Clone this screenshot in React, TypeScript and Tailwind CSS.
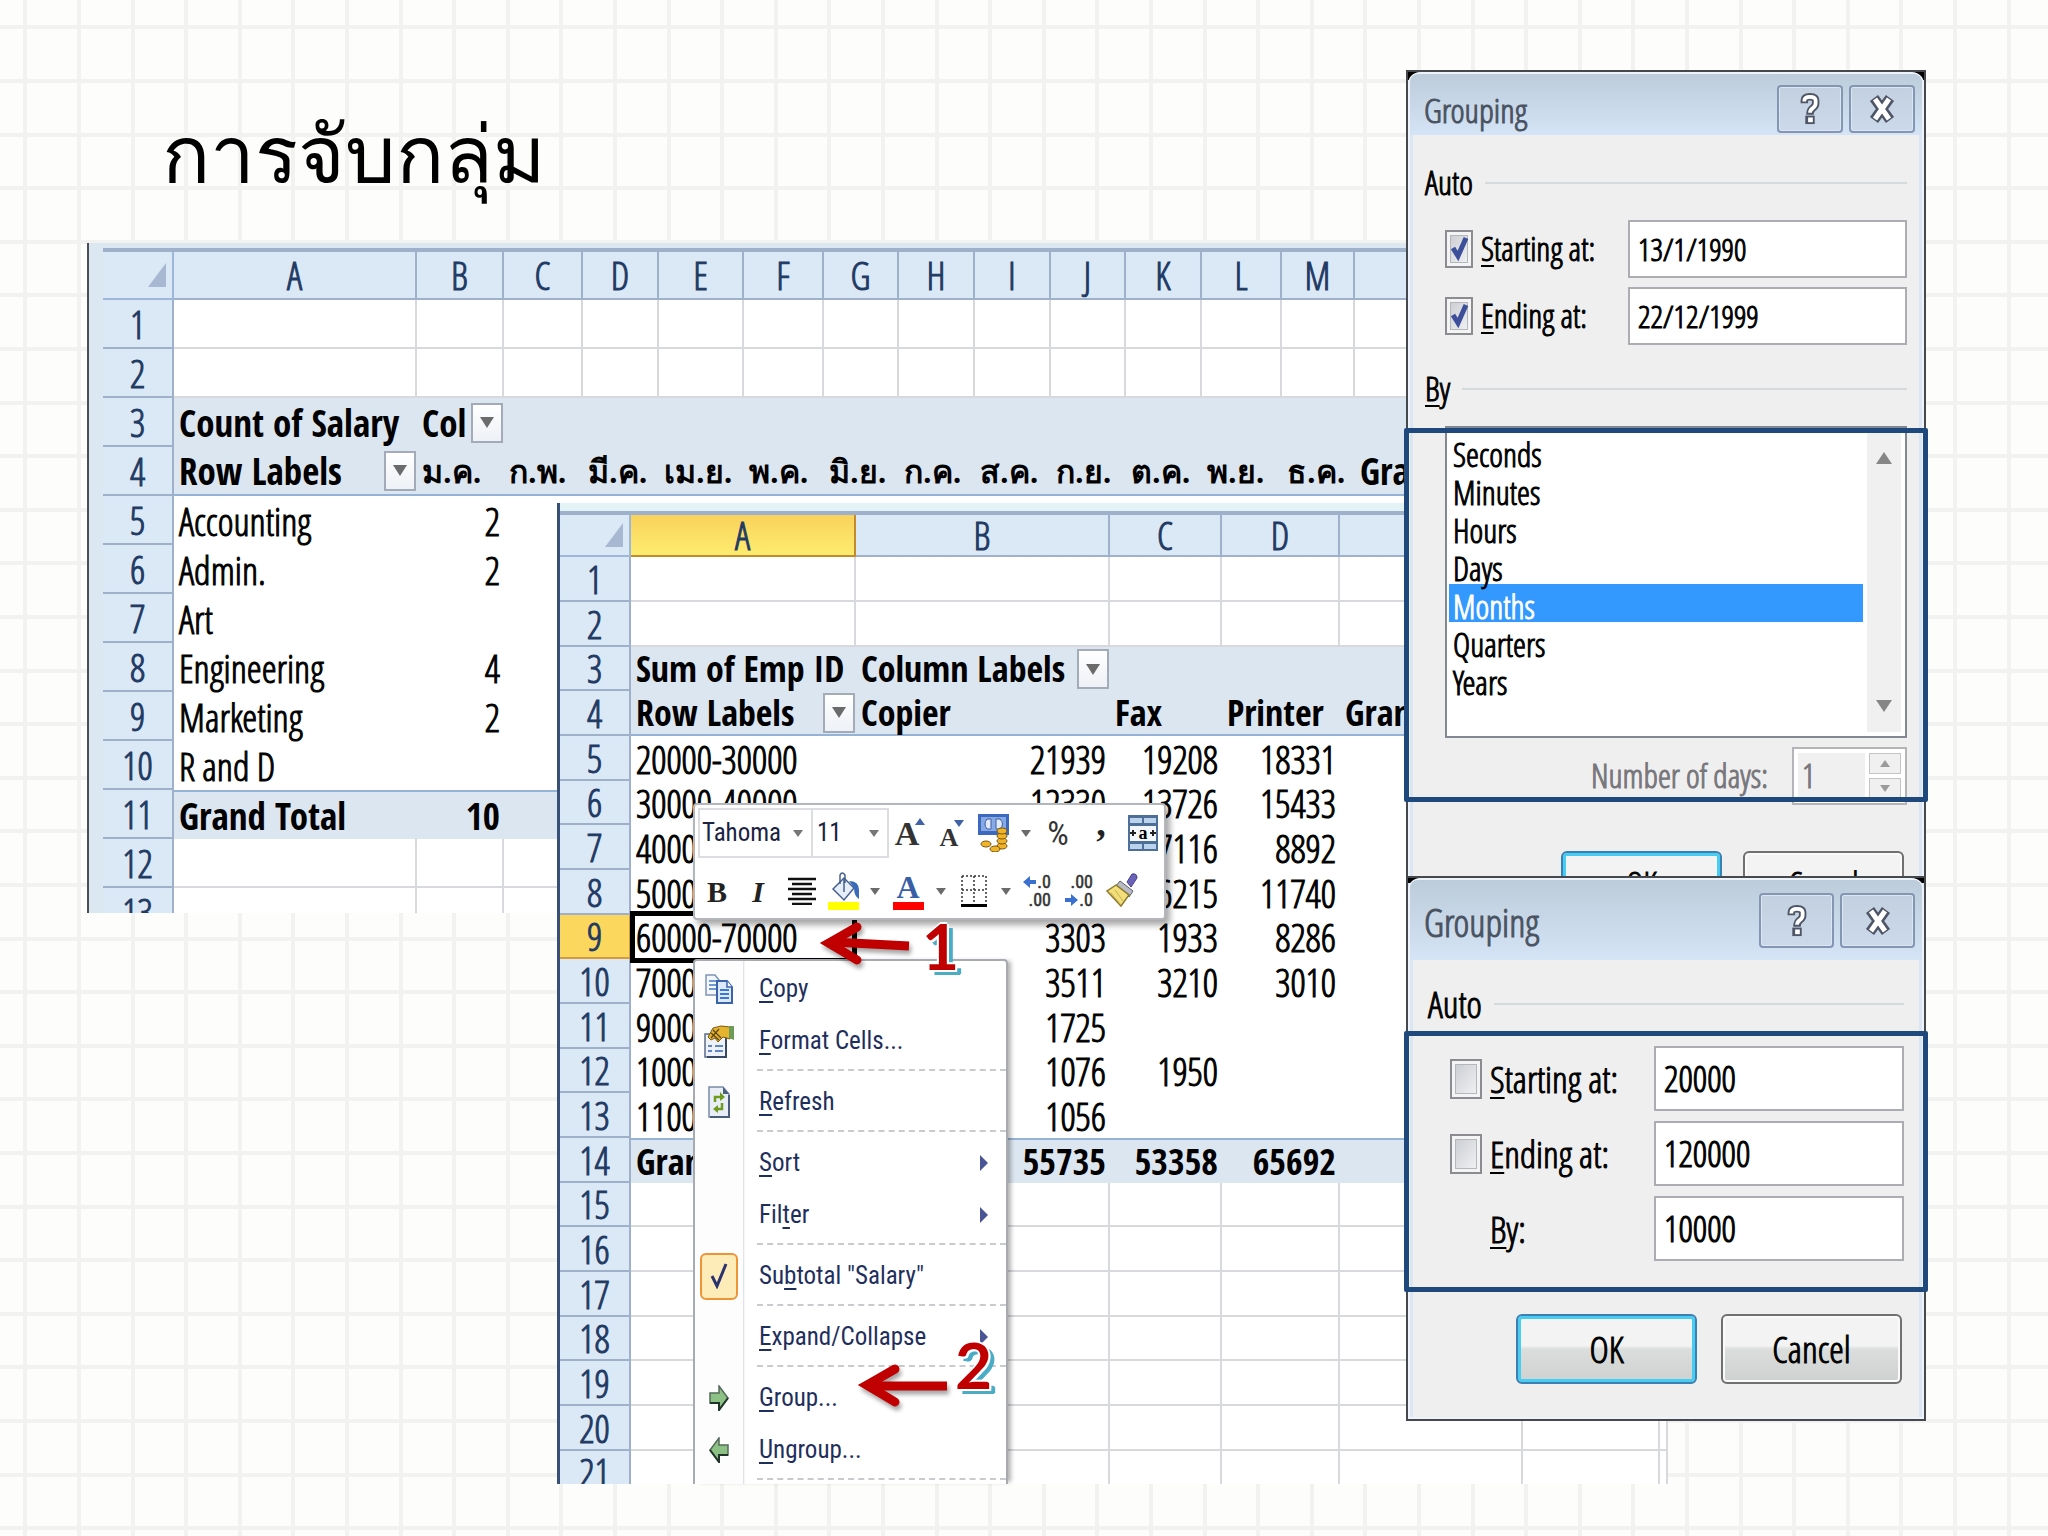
import React from 'react';
import clsx from 'clsx';

type Cell = string | number;
type RowKind = 'grid' | 'head' | 'headEnd' | 'data' | 'total';

interface SheetRow {
  kind: RowKind;
  cells?: Cell[];
  filters?: number[];
  active?: boolean;
}

interface SheetColumn {
  label: string;
  width: string;
  active?: boolean;
}

const staffColumns: SheetColumn[] = [
  { label: 'A', width: 'w-[243px]' },
  { label: 'B', width: 'w-[87px]' },
  { label: 'C', width: 'w-[79px]' },
  { label: 'D', width: 'w-[76px]' },
  { label: 'E', width: 'w-[85px]' },
  { label: 'F', width: 'w-[80px]' },
  { label: 'G', width: 'w-[75px]' },
  { label: 'H', width: 'w-[76px]' },
  { label: 'I', width: 'w-[76px]' },
  { label: 'J', width: 'w-[75px]' },
  { label: 'K', width: 'w-[76px]' },
  { label: 'L', width: 'w-[80px]' },
  { label: 'M', width: 'w-[73px]' },
  { label: '', width: 'w-[60px]' },
];

const staffRows: SheetRow[] = [
  { kind: 'grid' },
  { kind: 'grid' },
  { kind: 'head', cells: ['Count of Salary', 'Col'], filters: [1] },
  {
    kind: 'headEnd',
    cells: ['Row Labels', 'ม.ค.', 'ก.พ.', 'มี.ค.', 'เม.ย.', 'พ.ค.', 'มิ.ย.', 'ก.ค.', 'ส.ค.', 'ก.ย.', 'ต.ค.', 'พ.ย.', 'ธ.ค.', 'Gra'],
    filters: [0],
  },
  { kind: 'data', cells: ['Accounting', 2] },
  { kind: 'data', cells: ['Admin.', 2] },
  { kind: 'data', cells: ['Art'] },
  { kind: 'data', cells: ['Engineering', 4] },
  { kind: 'data', cells: ['Marketing', 2] },
  { kind: 'data', cells: ['R and D'] },
  { kind: 'total', cells: ['Grand Total', 10] },
  { kind: 'grid' },
  { kind: 'grid' },
];

const deviceColumns: SheetColumn[] = [
  { label: 'A', width: 'w-[225px]', active: true },
  { label: 'B', width: 'w-[254px]' },
  { label: 'C', width: 'w-[112px]' },
  { label: 'D', width: 'w-[118px]' },
  { label: '', width: 'w-[183px]' },
  { label: '', width: 'w-[137px]' },
  { label: '', width: 'w-[8px]' },
];

const deviceRows: SheetRow[] = [
  { kind: 'grid' },
  { kind: 'grid' },
  { kind: 'head', cells: ['Sum of Emp ID', 'Column Labels'], filters: [1] },
  { kind: 'headEnd', cells: ['Row Labels', 'Copier', 'Fax', 'Printer', 'Gran'], filters: [0] },
  { kind: 'data', cells: ['20000-30000', 21939, 19208, 18331] },
  { kind: 'data', cells: ['30000-40000', 12330, 13726, 15433] },
  { kind: 'data', cells: ['4000', '', 7116, 8892] },
  { kind: 'data', cells: ['5000', '', 6215, 11740] },
  { kind: 'data', cells: ['60000-70000', 3303, 1933, 8286], active: true },
  { kind: 'data', cells: ['7000', 3511, 3210, 3010] },
  { kind: 'data', cells: ['9000', 1725] },
  { kind: 'data', cells: ['1000', 1076, 1950] },
  { kind: 'data', cells: ['1100', 1056] },
  { kind: 'total', cells: ['Gran', 55735, 53358, 65692] },
  { kind: 'grid' },
  { kind: 'grid' },
  { kind: 'grid' },
  { kind: 'grid' },
  { kind: 'grid' },
  { kind: 'grid' },
  { kind: 'grid' },
];

const cellStyles: Record<RowKind, string> = {
  grid: 'border-r-2 border-b-2 border-[#d8d9dc] bg-white',
  head: 'bg-[#dce6f1]',
  headEnd: 'border-b-2 border-[#95b3d7] bg-[#dce6f1]',
  data: 'bg-white',
  total: 'border-t-2 border-[#95b3d7] bg-[#dce6f1]',
};

const isThai = (value: Cell) => /[\u0e00-\u0e7f]/.test(String(value));

const Caret = ({ className = 'fill-[#6b6b6b]' }: { className?: string }) => (
  <svg viewBox="0 0 10 7" className={clsx('h-[7px] w-[10px]', className)} aria-hidden="true">
    <path d="M0 0h10L5 7z" />
  </svg>
);

const FilterButton = ({ label }: { label: string }) => (
  <button
    type="button"
    aria-label={label}
    className="flex h-10 w-8 shrink-0 items-center justify-center border-2 border-[#a3abb8] bg-linear-to-b from-white to-[#eef1f6]"
  >
    <svg viewBox="0 0 14 11" className="h-[11px] w-[14px] fill-[#6b6b6b]" aria-hidden="true">
      <path d="M0 0h14L7 11z" />
    </svg>
  </button>
);

interface SheetProps {
  name: string;
  columns: SheetColumn[];
  rows: SheetRow[];
  headHeight: string;
  rowHeight: string;
  boldSize: string;
  className: string;
}

const Sheet = ({ name, columns, rows, headHeight, rowHeight, boldSize, className }: SheetProps) => (
  <section className={clsx('absolute isolate overflow-hidden', className)}>
    <table
      aria-label={name}
      className="w-full table-fixed border-separate border-spacing-0 border-t-4 border-[#9eb0ca] text-[38px] leading-10 whitespace-nowrap"
    >
      <colgroup>
        <col className="w-[71px]" />
        {columns.map((col, i) => (
          <col key={i} className={col.width} />
        ))}
      </colgroup>
      <thead>
        <tr className={headHeight}>
          <th aria-label="Select all" className="border-r-2 border-b-2 border-[#9eb6d8] bg-[#dbe8f6] p-0">
            <svg viewBox="0 0 18 24" className="mr-1.5 ml-auto h-6 w-[18px] fill-[#a9b8d2]" aria-hidden="true">
              <path d="M18 0v24H0z" />
            </svg>
          </th>
          {columns.map((col, i) => (
            <th
              key={i}
              className={clsx(
                'border-r-2 border-b-2 p-0 text-center font-normal text-[#1f3a63] [-webkit-text-stroke:1px]',
                col.active ? 'border-[#c58a2a] bg-linear-to-b from-[#f9d25c] to-[#fdec6f]' : 'border-[#9eb0ca] bg-[#dbe8f6]',
              )}
            >
              {col.label}
            </th>
          ))}
        </tr>
      </thead>
      <tbody>
        {rows.map((row, r) => (
          <tr key={r} className={rowHeight}>
            <th
              className={clsx(
                'border-r-2 border-b-2 p-0 text-center font-normal text-[#1f3a63] [-webkit-text-stroke:1px]',
                row.active ? 'border-[#d59a3a] bg-[#fbd75e]' : 'border-[#9eb0ca] bg-[#dbe8f6]',
              )}
            >
              {r + 1}
            </th>
            {columns.map((_, c) => {
              const value = row.cells?.[c] ?? '';
              const bold = row.kind !== 'data' && row.kind !== 'grid';
              return (
                <td
                  key={c}
                  className={clsx(
                    'py-0 pr-1 pl-[5px] text-black',
                    cellStyles[row.kind],
                    typeof value === 'number' && 'text-right',
                    bold
                      ? 'font-["Open_Sans_Condensed","Roboto_Condensed",sans-serif] font-bold'
                      : '[-webkit-text-stroke:1px]',
                    bold && (isThai(value) ? 'text-[32px]' : boldSize),
                    row.active && c === 0 && 'relative z-10',
                  )}
                >
                  {row.filters?.includes(c) ? (
                    <span className="-mr-[3px] flex items-center justify-between">
                      <span>{value}</span>
                      <FilterButton label={`Filter ${value}`} />
                    </span>
                  ) : (
                    value
                  )}
                  {row.active && c === 0 && <span className="absolute -inset-x-px -inset-y-1 border-[5px] border-black" />}
                </td>
              );
            })}
          </tr>
        ))}
      </tbody>
    </table>
  </section>
);

const TitleBar = ({ large }: { large?: boolean }) => (
  <header
    className={clsx(
      'flex justify-between rounded-t-lg bg-linear-to-b from-[#bdccda] to-[#d5e4f6] pr-[7px] pl-3.5 text-[#4a5361]',
      large ? 'h-20 pt-[13px] text-[38px]' : 'h-[68px] pt-[11px] text-[34px]',
    )}
  >
    <h2 className={large ? 'leading-[58px]' : 'leading-[50px]'}>Grouping</h2>
    <div className="flex gap-1.5">
      {['Help', 'Close'].map((name) => (
        <button
          key={name}
          type="button"
          aria-label={name}
          className={clsx(
            'flex items-center justify-center rounded-sm border-2 border-[#8496b4] bg-linear-to-b from-[#c3d0e0] to-[#cbd9ea] shadow-[inset_0_0_0_1px_#dce6f1]',
            large ? 'h-[55px] w-[75px]' : 'h-12 w-[66px]',
          )}
        >
          {name === 'Help' ? (
            <svg viewBox="0 0 20 34" className="h-8 w-5" fill="none" aria-hidden="true">
              <path d="M4 11V8q0-4 6-4t6 4v3q0 3-3 5t-3 7" stroke="#4d5566" strokeWidth="8" />
              <path d="M5 24h10v9H5z" fill="#4d5566" />
              <path d="M4 9V8q0-4 6-4t6 4v3q0 3-3 5t-3 5" stroke="#fff" strokeWidth="4" />
              <path d="M8 26h5v5H8z" fill="#fff" />
            </svg>
          ) : (
            <svg viewBox="0 0 26 28" className="h-7 w-[26px]" fill="none" aria-hidden="true">
              <path d="m5 3 16 22M21 3 5 25" stroke="#4d5566" strokeWidth="10" />
              <path d="m6 4 14 20M20 4 6 24" stroke="#fff" strokeWidth="5" />
            </svg>
          )}
        </button>
      ))}
    </div>
  </header>
);

interface DialogProps {
  className: string;
  large?: boolean;
  children: React.ReactNode;
}

const Dialog = ({ className, large, children }: DialogProps) => (
  <section
    role="dialog"
    aria-label="Grouping"
    className={clsx(
      'absolute left-[1406px] w-[520px] overflow-hidden border-2 border-[#45484c] bg-linear-to-b from-black from-1% to-[#dbe5f3] to-1% [-webkit-text-stroke:1px]',
      className,
    )}
  >
    <div className="flex h-full flex-col rounded-t-xl border-2 border-[#eef3fa] bg-[#dbe5f3]">
      <TitleBar large={large} />
      <div className="mx-[3px] flex-1 bg-[#f0eff0]">{children}</div>
    </div>
  </section>
);

const GroupLabel = ({ children }: { children: React.ReactNode }) => (
  <div className="flex h-10 items-center gap-3">
    <span>{children}</span>
    <span className="h-0.5 flex-1 bg-[#d5dadd]" />
  </div>
);

const Key = ({ children }: { children: React.ReactNode }) => (
  <u className="decoration-2 underline-offset-4">{children}</u>
);

interface RangeFieldProps {
  id: string;
  hotkey: string;
  label: string;
  value: string;
  checked?: boolean;
  large?: boolean;
  noCheck?: boolean;
}

const RangeField = ({ id, hotkey, label, value, checked, large, noCheck }: RangeFieldProps) => (
  <div className={clsx('flex items-center', large ? 'h-[65px]' : 'h-[58px]')}>
    {noCheck ? (
      <span className="w-8" />
    ) : (
      <span className="relative flex">
        <input
          id={`${id}-on`}
          type="checkbox"
          defaultChecked={checked}
          aria-label={`${hotkey}${label}`}
          className={clsx(
            'appearance-none border-2 border-[#8a8c90] bg-linear-to-br from-[#c6c9cf] to-[#f6f6f7] shadow-[inset_0_0_0_3px_#f4f4f4,inset_0_0_0_4px_#b4b7bc]',
            large ? 'h-10 w-8' : 'h-[38px] w-7',
          )}
        />
        {checked && (
          <svg viewBox="0 0 20 26" className="pointer-events-none absolute top-1.5 left-1 h-[26px] w-5" fill="none" aria-hidden="true">
            <path d="m4 12 5 8 8-18" stroke="#3d4f9b" strokeWidth="5" />
          </svg>
        )}
      </span>
    )}
    <label htmlFor={id} className="ml-2 flex-1 whitespace-nowrap">
      <Key>{hotkey}</Key>
      {label}
    </label>
    <input
      id={id}
      defaultValue={value}
      className={clsx(
        'h-full border-2 border-[#abadb3] bg-white px-2 outline-none [-webkit-text-stroke:1px]',
        large ? 'w-[250px] text-[36px]' : 'w-[279px] text-[31px]',
      )}
    />
  </div>
);

const DialogButton = ({ primary, large, children }: { primary?: boolean; large?: boolean; children: React.ReactNode }) => (
  <button
    type="button"
    className={clsx(
      'rounded-md border-2 bg-linear-to-b from-[#f2f3f2] from-45% via-[#dcdedd] via-50% to-[#cfd1d0] [-webkit-text-stroke:1px]',
      primary ? 'border-[#3c7fb1] shadow-[inset_0_0_0_3px_#48cdf2]' : 'border-[#707070] shadow-[inset_0_0_0_2px_#fafafa]',
      large ? 'h-[70px] w-[181px]' : 'h-[66px] w-[161px]',
    )}
  >
    {children}
  </button>
);

const units = ['Seconds', 'Minutes', 'Hours', 'Days', 'Months', 'Quarters', 'Years'];

const DateGrouping = () => (
  <Dialog className="top-[70px] h-[810px] text-[33px]">
    <div className="flex flex-col pt-7 pr-3 pl-3 leading-[38px]">
      <GroupLabel>Auto</GroupLabel>
      <div className="mt-[17px] flex flex-col gap-[9px] pl-5">
        <RangeField id="date-start" hotkey="S" label="tarting at:" value="13/1/1990" checked />
        <RangeField id="date-end" hotkey="E" label="nding at:" value="22/12/1999" checked />
      </div>
      <div className="mt-6">
        <GroupLabel>
          <Key>B</Key>y
        </GroupLabel>
      </div>
      <div className="mt-[17px] ml-5 flex h-[312px] border-2 border-[#828790] bg-white">
        <select
          size={7}
          defaultValue="Months"
          aria-label="By"
          className="flex-1 appearance-none overflow-hidden bg-white pt-1 pl-0.5 text-black outline-none"
        >
          {units.map((unit) => (
            <option
              key={unit}
              className="h-[38px] min-h-0 p-0 pl-1 leading-[38px] [-webkit-text-stroke:1px] checked:bg-[linear-gradient(#3399ff,#3399ff)] checked:text-white"
            >
              {unit}
            </option>
          ))}
        </select>
        <div className="my-1 mr-1 ml-1 flex w-[34px] flex-col items-center justify-between bg-[#f0f0f1] py-5" aria-hidden="true">
          <svg viewBox="0 0 16 12" className="h-3 w-4 fill-[#868686]">
            <path d="m8 0 8 12H0z" />
          </svg>
          <svg viewBox="0 0 16 12" className="h-3 w-4 fill-[#868686]">
            <path d="M0 0h16L8 12z" />
          </svg>
        </div>
      </div>
      <div className="mt-[9px] flex h-[58px] items-center justify-end gap-6 text-[#77777b]">
        <label htmlFor="days">Number of days:</label>
        <div className="flex h-full w-[115px] border-2 border-[#b4b5b8] bg-white p-1">
          <input id="days" defaultValue="1" disabled className="min-w-0 flex-1 bg-[#f0f0f0] pl-1 [-webkit-text-stroke:1px]" />
          <div className="ml-1 flex w-[32px] flex-col gap-1">
            <button type="button" aria-label="More days" className="flex flex-1 items-center justify-center border border-[#c4c4c6] bg-[#f0f0f0]">
              <Caret className="rotate-180 fill-[#9a9a9a]" />
            </button>
            <button type="button" aria-label="Fewer days" className="flex flex-1 items-center justify-center border border-[#c4c4c6] bg-[#f0f0f0]">
              <Caret className="fill-[#9a9a9a]" />
            </button>
          </div>
        </div>
      </div>
      <div className="mt-[46px] flex justify-end gap-[21px] pr-[3px]">
        <DialogButton primary>OK</DialogButton>
        <DialogButton>Cancel</DialogButton>
      </div>
    </div>
  </Dialog>
);

const NumberGrouping = () => (
  <Dialog large className="top-[876px] h-[545px] text-[37px]">
    <div className="flex flex-col pt-6 pr-[15px] pl-[15px] leading-10">
      <GroupLabel>Auto</GroupLabel>
      <div className="mt-[22px] flex flex-col gap-[10px] pl-[22px]">
        <RangeField large id="num-start" hotkey="S" label="tarting at:" value="20000" />
        <RangeField large id="num-end" hotkey="E" label="nding at:" value="120000" />
        <RangeField large noCheck id="num-by" hotkey="B" label="y:" value="10000" />
      </div>
      <div className="mt-[53px] flex justify-end gap-6 pr-0.5">
        <DialogButton primary large>
          OK
        </DialogButton>
        <DialogButton large>Cancel</DialogButton>
      </div>
    </div>
  </Dialog>
);

const CopyIcon = () => (
  <svg viewBox="0 0 28 30" className="h-[30px] w-7" aria-hidden="true">
    <path d="M1 1h9l4 5v15H1z" fill="#f4f8fd" stroke="#7d93b8" strokeWidth="1.5" />
    <path d="M4 7h7M4 11h7M4 15h7" stroke="#6f97d4" strokeWidth="2" />
    <path d="M12 7h10l5 6v16H12z" fill="#dbe9fb" stroke="#3a62ad" strokeWidth="2" />
    <path d="M22 7v6h5" fill="#fff" stroke="#3a62ad" strokeWidth="1.5" />
    <path d="M15 16h9M15 20h9M15 24h9" stroke="#3d78cf" strokeWidth="2" />
  </svg>
);

const FormatIcon = () => (
  <svg viewBox="0 0 30 33" className="h-[33px] w-[30px]" aria-hidden="true">
    <path d="M1 9h21v23H1z" fill="#eef2f8" stroke="#5a6c88" strokeWidth="1.5" />
    <path d="M22 12v20H3" fill="none" stroke="#394a66" strokeWidth="2" />
    <path d="M4 21h4M11 21h8M4 26h4M11 26h8" stroke="#5e86c4" strokeWidth="2" />
    <path d="M4 12 9 3l8-2 9 1v12l-7-2-5 5-3-4-4 2z" fill="#e5b32e" stroke="#7c5a13" />
    <path d="m7 8 8 7M9 5l8 8M7 13l8-9" stroke="#5d450f" strokeWidth="1.2" />
    <path d="M25 1h5v14l-5-2z" fill="#6c9b57" />
  </svg>
);

const RefreshIcon = () => (
  <svg viewBox="0 0 22 32" className="h-8 w-[22px]" aria-hidden="true">
    <path d="M1 1h14l6 7v23H1z" fill="#e9eef6" stroke="#7a8ba6" strokeWidth="1.5" />
    <path d="M15 1v7h6" fill="#4b5d7b" />
    <path d="M21 9v22H2" fill="none" stroke="#4b5d7b" strokeWidth="2" />
    <path d="M7 16v-5h7M14 17v6H7" fill="none" stroke="#6e9a1e" strokeWidth="2.5" />
    <path d="m12 6 5 5-5 4zM10 19l-5 4 5 4z" fill="#6e9a1e" />
  </svg>
);

const GroupArrow = ({ flip }: { flip?: boolean }) => (
  <svg viewBox="0 0 20 26" className={clsx('h-[26px] w-5', flip && '-scale-x-100')} aria-hidden="true">
    <path d="M1 8h9V1l9 12-9 12v-7H1z" fill="#8cc084" stroke="#55695a" strokeWidth="1.5" />
    <path d="M1 18h9v7l9-12" fill="none" stroke="#20352a" strokeWidth="2" />
  </svg>
);

const CheckedIcon = () => (
  <span className="flex h-[47px] w-[38px] items-center justify-center rounded-md border-2 border-[#ee9438] bg-[#fdecb8]">
    <svg viewBox="0 0 18 26" className="h-[26px] w-[18px]" fill="none" aria-hidden="true">
      <path d="m2 13 5 10L16 1" stroke="#2b3270" strokeWidth="3" />
    </svg>
  </span>
);

interface MenuEntry {
  before: string;
  hotkey: string;
  after: string;
  icon?: React.ReactNode;
  submenu?: boolean;
}

const menuGroups: MenuEntry[][] = [
  [
    { before: '', hotkey: 'C', after: 'opy', icon: <CopyIcon /> },
    { before: '', hotkey: 'F', after: 'ormat Cells...', icon: <FormatIcon /> },
  ],
  [{ before: '', hotkey: 'R', after: 'efresh', icon: <RefreshIcon /> }],
  [
    { before: '', hotkey: 'S', after: 'ort', submenu: true },
    { before: 'Fil', hotkey: 't', after: 'er', submenu: true },
  ],
  [{ before: 'Su', hotkey: 'b', after: 'total "Salary"', icon: <CheckedIcon /> }],
  [{ before: '', hotkey: 'E', after: 'xpand/Collapse', submenu: true }],
  [
    { before: '', hotkey: 'G', after: 'roup...', icon: <GroupArrow /> },
    { before: '', hotkey: 'U', after: 'ngroup...', icon: <GroupArrow flip /> },
  ],
];

const ContextMenu = () => (
  <div
    role="menu"
    className="absolute top-[959px] left-[693px] h-[525px] w-[315px] rounded-t border-2 border-b-0 border-[#a7abb0] bg-linear-to-r from-[#fdfdfd] from-[48px] via-[#d9dadc] via-[48px] to-white to-[50px] pt-0.5 font-['Roboto_Condensed',sans-serif] text-[25px] text-[#1f2f5c] shadow-[5px_0_4px_-2px_rgba(0,0,0,0.3)]"
  >
    {menuGroups.map((group, g) => (
      <React.Fragment key={g}>
        {group.map((entry) => (
          <button key={entry.hotkey} type="button" role="menuitem" className="flex h-[52px] w-full items-center text-left">
            <span className="flex w-[48px] justify-center">{entry.icon}</span>
            <span className="ml-4 flex-1">
              {entry.before}
              <Key>{entry.hotkey}</Key>
              {entry.after}
            </span>
            {entry.submenu && (
              <svg viewBox="0 0 8 16" className="mr-[18px] h-4 w-2 fill-[#4a5596]" aria-hidden="true">
                <path d="m0 0 8 8-8 8z" />
              </svg>
            )}
          </button>
        ))}
        <div role="separator" className="mt-[2px] mb-[5px] ml-[62px] border-t-2 border-dashed border-[#c9cacd]" />
      </React.Fragment>
    ))}
  </div>
);

const CurrencyIcon = () => (
  <svg viewBox="0 0 32 38" className="h-[38px] w-8" aria-hidden="true">
    <path d="M0 0h31v21H0z" fill="#3c68bd" />
    <path d="M3 3h25v14H3z" fill="#87a9e4" />
    <path d="M9 5q-4 5 0 10h4V5zM18 5v10h4q5-5 0-10z" fill="#dfe9fa" stroke="#3c5ca4" />
    <g fill="#f0b429" stroke="#7d5610">
      <ellipse cx="24" cy="32" rx="5" ry="3" />
      <ellipse cx="24" cy="27" rx="5" ry="3" />
      <ellipse cx="24" cy="22" rx="5" ry="3" />
      <ellipse cx="24" cy="17" rx="5" ry="3" />
      <ellipse cx="8" cy="30" rx="5" ry="3" />
      <ellipse cx="17" cy="35" rx="5" ry="3" />
    </g>
  </svg>
);

const MergeIcon = () => (
  <svg viewBox="0 0 30 36" className="h-9 w-[30px]" aria-hidden="true">
    <path d="M0 0h30v36H0z" fill="#4e6f98" />
    <path d="M2 3h12v5H2zM16 3h12v5H16zM2 29h12v5H2zM16 29h12v5H16z" fill="#bcd3ee" />
    <path d="M2 11h26v15H2z" fill="#f3f7fc" />
    <path d="M2 18h6M5 15v6M28 18h-6M25 15v6" stroke="#222" strokeWidth="2" />
    <text x="15" y="24" textAnchor="middle" fontSize="18" fontWeight="700" fontFamily="Liberation Serif, serif">
      a
    </text>
  </svg>
);

const BucketIcon = () => (
  <svg viewBox="0 0 32 38" className="h-[38px] w-8" aria-hidden="true">
    <path d="M0 30h31v8H0z" fill="#ffff00" />
    <path d="m5 17 11-11 10 10-10 12z" fill="#e6eefa" stroke="#47618f" strokeWidth="1.5" />
    <path d="M16 6v14M12 12V3q2-4 5 0v8" fill="none" stroke="#47618f" strokeWidth="1.5" />
    <path d="M21 9q10 0 10 9v9q-5-3-5-11z" fill="#3a6bb8" />
  </svg>
);

const BordersIcon = () => (
  <svg viewBox="0 0 26 32" className="h-8 w-[26px]" fill="none" stroke="#333" aria-hidden="true">
    <path d="M1 1h24v26M1 1v26M13 1v26M1 15h24" strokeWidth="1.5" strokeDasharray="2 2" />
    <path d="M0 30.5h26" stroke="#000" strokeWidth="3" />
  </svg>
);

const DecimalIcon = ({ decrease }: { decrease?: boolean }) => (
  <svg viewBox="0 0 32 34" className="h-[34px] w-8" aria-hidden="true">
    <g fontSize="18" fontFamily="Roboto Condensed, sans-serif" fill="#333" stroke="#333" strokeWidth=".5" textAnchor="end">
      <text x="30" y="14">{decrease ? '.00' : '.0'}</text>
      <text x="30" y="32">{decrease ? '.0' : '.00'}</text>
    </g>
    <path d={decrease ? 'M2 24h6v-4l7 6-7 6v-4H2z' : 'M15 6H9V2L2 8l7 6v-4h6z'} fill="#3b6fd0" />
  </svg>
);

const BrushIcon = () => (
  <svg viewBox="0 0 32 36" className="h-9 w-8" aria-hidden="true">
    <path d="m21 9 5-8q5-1 5 4l-6 9z" fill="#6a63b8" stroke="#453f86" />
    <path d="m14 8 13 10-4 6L10 13z" fill="#b9bcc6" stroke="#5b5e68" />
    <path d="M10 12 1 18l14 15 8-11z" fill="#f2df7c" stroke="#8d7a2c" strokeWidth="1.5" />
    <path d="m5 20 10 12M9 17l8 11" stroke="#c9b14c" />
  </svg>
);

const ToolButton = ({ label, className, children }: { label: string; className: string; children: React.ReactNode }) => (
  <button type="button" aria-label={label} className={clsx('flex h-full shrink-0 items-center justify-center', className)}>
    {children}
  </button>
);

const MiniToolbar = () => (
  <div
    role="toolbar"
    aria-label="Formatting"
    className="absolute top-[803px] left-[693px] w-[473px] rounded border-2 border-[#b3b6ba] bg-white pt-[3px] pb-[2px] pl-[3px] font-['Roboto_Condensed',sans-serif] shadow-[4px_5px_6px_rgba(0,0,0,0.35)]"
  >
    <div className="flex h-[50px]">
      <div className="flex w-[115px] items-center border-2 border-[#dcdde0] text-[25px]">
        <select aria-label="Font" className="min-w-0 flex-1 appearance-none pl-0.5 text-[#1c2340] outline-none">
          <option>Tahoma</option>
        </select>
        <Caret className="mr-2 fill-[#777]" />
      </div>
      <div className="flex w-[76px] items-center border-2 border-l-0 border-[#dcdde0] text-[25px]">
        <select aria-label="Font size" className="min-w-0 flex-1 appearance-none pl-1 text-[#1c2340] outline-none">
          <option>11</option>
        </select>
        <Caret className="mr-2 fill-[#777]" />
      </div>
      <ToolButton label="Grow font" className="w-[42px] font-['Liberation_Serif',serif] text-[34px] font-bold text-[#333]">
        A
        <Caret className="mb-6 -ml-1 rotate-180 fill-[#3f62a8]" />
      </ToolButton>
      <ToolButton label="Shrink font" className="w-[42px] font-['Liberation_Serif',serif] text-[26px] font-bold text-[#333]">
        <span className="pt-2">A</span>
        <Caret className="mb-5 -ml-1 fill-[#3f62a8]" />
      </ToolButton>
      <ToolButton label="Accounting format" className="w-[42px]">
        <CurrencyIcon />
      </ToolButton>
      <ToolButton label="Currencies" className="w-[22px]">
        <Caret />
      </ToolButton>
      <ToolButton label="Percent" className="w-[42px] text-[34px] text-[#333]">
        %
      </ToolButton>
      <ToolButton label="Comma" className="w-[44px] pb-5 font-['Liberation_Serif',serif] text-[38px] font-bold text-[#222]">
        ,
      </ToolButton>
      <ToolButton label="Merge and center" className="w-10">
        <MergeIcon />
      </ToolButton>
    </div>
    <div className="mt-2 flex h-[50px] font-['Liberation_Serif',serif] text-[30px] text-[#222]">
      <ToolButton label="Bold" className="w-[38px] font-bold">
        B
      </ToolButton>
      <ToolButton label="Italic" className="w-[44px] font-bold italic">
        I
      </ToolButton>
      <ToolButton label="Center" className="w-[44px]">
        <svg viewBox="0 0 28 28" className="size-7" stroke="#111" strokeWidth="2.5" aria-hidden="true">
          <path d="M0 2h28M4 7h20M0 12h28M4 17h20M0 22h28M4 27h20" />
        </svg>
      </ToolButton>
      <ToolButton label="Fill color" className="w-10">
        <BucketIcon />
      </ToolButton>
      <ToolButton label="Fill colors" className="w-[22px]">
        <Caret />
      </ToolButton>
      <ToolButton label="Font color" className="w-[44px]">
        <span className="h-[38px] w-[31px] border-b-8 border-[#ff0000] text-center text-[32px] leading-[30px] font-bold text-[#3a5ea6]">A</span>
      </ToolButton>
      <ToolButton label="Font colors" className="w-[22px]">
        <Caret />
      </ToolButton>
      <ToolButton label="Borders" className="w-[44px]">
        <BordersIcon />
      </ToolButton>
      <ToolButton label="Border styles" className="w-5">
        <Caret />
      </ToolButton>
      <ToolButton label="Increase decimal" className="w-[42px]">
        <DecimalIcon />
      </ToolButton>
      <ToolButton label="Decrease decimal" className="w-[42px]">
        <DecimalIcon decrease />
      </ToolButton>
      <ToolButton label="Format painter" className="w-[44px]">
        <BrushIcon />
      </ToolButton>
    </div>
  </div>
);

// Red pointer plus its step number
const Step = ({ n, arrow, number, tilt }: { n: number; arrow: string; number: string; tilt?: boolean }) => (
  <>
    <svg viewBox="0 0 94 50" className={clsx('absolute h-[50px] w-[94px] overflow-visible drop-shadow-[2px_4px_2px_rgba(0,0,0,0.35)]', arrow)} aria-hidden="true">
      <path d={tilt ? 'M14 21 90 25' : 'M14 23h76'} stroke="#c00000" strokeWidth="9" />
      <path d="M38 6 10 22l28 17" fill="none" stroke="#c00000" strokeWidth="9" strokeLinecap="round" />
      <path d="M1 22 20 12v21z" fill="#c00000" />
    </svg>
    <span
      className={clsx(
        'absolute font-["Lato",sans-serif] text-[64px] leading-[64px] font-bold text-[#c00000] [text-shadow:-2px_0_0_#fff,2px_0_0_#fff,0_-2px_0_#fff,0_2px_0_#fff,2px_2px_0_#fff,5px_5px_0_#4bacc6,6px_4px_0_#4bacc6]',
        number,
      )}
    >
      {n}
    </span>
  </>
);

const GraphPaper = () => (
  <svg className="absolute inset-0 size-full" aria-hidden="true">
    <defs>
      <pattern id="paper" x="77" y="79" width="268" height="268" patternUnits="userSpaceOnUse">
        <path
          d="M2 0v268M56 0v268M109 0v268M163 0v268M216 0v268M0 2h268M0 56h268M0 109h268M0 163h268M0 216h268"
          stroke="#f2f2f0"
          strokeWidth="4"
        />
      </pattern>
    </defs>
    <rect width="100%" height="100%" fill="#fdfdfb" />
    <rect width="100%" height="100%" fill="url(#paper)" />
  </svg>
);

const App = () => {
  return (
    <main className="relative min-h-screen overflow-hidden font-['Open_Sans_Condensed_Light','Roboto_Condensed',sans-serif] text-black">
      <GraphPaper />
      <h1 className="relative pt-24 pl-[162px] font-['Norasi','Kinnari','Liberation_Serif',serif] text-[80px] leading-[120px]">
        การจับกลุ่ม
      </h1>

      <Sheet
        name="Count of Salary"
        columns={staffColumns}
        rows={staffRows}
        headHeight="h-[48px]"
        rowHeight="h-[49px]"
        boldSize="text-[37px]"
        className="top-[243px] left-[87px] h-[670px] w-[1328px] border-l-2 border-[#4a4d55] bg-[#dbe8f2] pt-[5px] pl-[14px]"
      />
      <Sheet
        name="Sum of Emp ID"
        columns={deviceColumns}
        rows={deviceRows}
        headHeight="h-[42px]"
        rowHeight="h-[45px] nth-[3n]:h-[44px]"
        boldSize="text-[36px]"
        className="top-[503px] left-[557px] h-[981px] w-[1111px] border-l-3 border-[#385078] bg-[#e4f3f6] pt-2"
      />

      <MiniToolbar />
      <ContextMenu />
      <Step n={1} tilt arrow="top-[921px] left-[819px]" number="top-[914px] left-[922px]" />
      <Step n={2} arrow="top-[1363px] left-[857px]" number="top-[1333px] left-[955px]" />

      <DateGrouping />
      <NumberGrouping />
      <div className="pointer-events-none absolute top-[428px] left-[1404px] h-[374px] w-[524px] rounded-xs border-[5px] border-[#1f497d]" />
      <div className="pointer-events-none absolute top-[1031px] left-[1404px] h-[261px] w-[524px] rounded-xs border-[5px] border-[#1f497d]" />
    </main>
  );
};

export default App;
